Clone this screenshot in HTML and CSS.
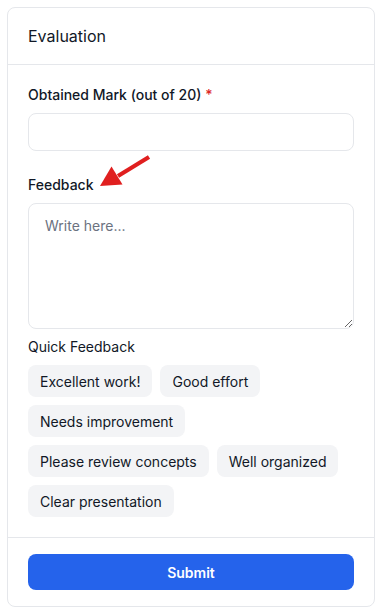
FILE: index.html
```html
<!DOCTYPE html>
<html lang="en">
<head>
<meta charset="utf-8">
<link rel="stylesheet" href="styles.css">
</head>
<body>
<div class="page">
  <div class="card">
    <div class="card-header">Evaluation</div>
    <div class="card-body">
      <div class="field">
        <label class="label">Obtained Mark (out of 20) <span class="req">*</span></label>
        <input class="input" type="text">
      </div>
      <div class="field feedback-field">
        <label class="label">Feedback</label>
        <svg class="arrow" width="60" height="40" viewBox="0 0 60 40" aria-hidden="true">
          <line x1="57" y1="3" x2="26" y2="22" stroke="#e01f1f" stroke-width="4.2" stroke-linecap="butt"/>
          <polygon points="8,32 19.5,12.5 30.5,30.5" fill="#e01f1f"/>
        </svg>
        <textarea class="textarea" placeholder="Write here..."></textarea>
      </div>
      <div class="quick-title">Quick Feedback</div>
      <div class="chips">
        <button class="chip">Excellent work!</button>
        <button class="chip">Good effort</button>
        <button class="chip">Needs improvement</button>
        <button class="chip">Please review concepts</button>
        <button class="chip">Well organized</button>
        <button class="chip">Clear presentation</button>
      </div>
    </div>
    <div class="card-footer">
      <button class="submit">Submit</button>
    </div>
  </div>
</div>
</body>
</html>
```

FILE: styles.css
```css
* { box-sizing: border-box; }
html, body { margin: 0; padding: 0; background: #ffffff; }
body {
  font-family: Inter, "Liberation Sans", sans-serif;
  color: #111827;
}
.page { padding: 7px 12px 0 7px; }
.card {
  width: 368px;
  border: 1px solid #e5e7eb;
  border-radius: 8px;
  background: #fff;
}
.card-header {
  padding: 16px 20px;
  font-size: 16px;
  line-height: 24px;
  border-bottom: 1px solid #e5e7eb;
}
.card-body { padding: 20px; }
.field { display: flex; flex-direction: column; gap: 8px; }
.feedback-field { margin-top: 24px; position: relative; }
.label {
  font-size: 14px;
  line-height: 20px;
  font-weight: 500;
}
.req { color: #dc2626; }
.input {
  height: 38px;
  border: 1px solid #e5e7eb;
  border-radius: 8px;
  padding: 0 16px;
  font: inherit;
  font-size: 14px;
  outline: none;
}
.textarea {
  height: 126px;
  border: 1px solid #e5e7eb;
  border-radius: 8px;
  padding: 12px 16px;
  font-family: inherit;
  font-size: 14px;
  line-height: 20px;
  resize: vertical;
  outline: none;
}
.textarea::placeholder { color: #6b7280; }
.arrow { position: absolute; left: 64px; top: -21px; }
.quick-title {
  margin-top: 8px;
  font-size: 14px;
  line-height: 20px;
  color: #111827;
}
.chips {
  margin-top: 8px;
  display: flex;
  flex-wrap: wrap;
  gap: 8px;
}
.chip {
  height: 32px;
  padding: 0 12px;
  border: none;
  border-radius: 8px;
  background: #f3f4f6;
  font-family: inherit;
  font-size: 14px;
  color: #111827;
}
.card-footer {
  border-top: 1px solid #e5e7eb;
  padding: 16px 20px;
}
.submit {
  width: 100%;
  height: 36px;
  border: none;
  border-radius: 8px;
  background: #2563eb;
  color: #fff;
  font-family: inherit;
  font-size: 14px;
  font-weight: 600;
}
```
